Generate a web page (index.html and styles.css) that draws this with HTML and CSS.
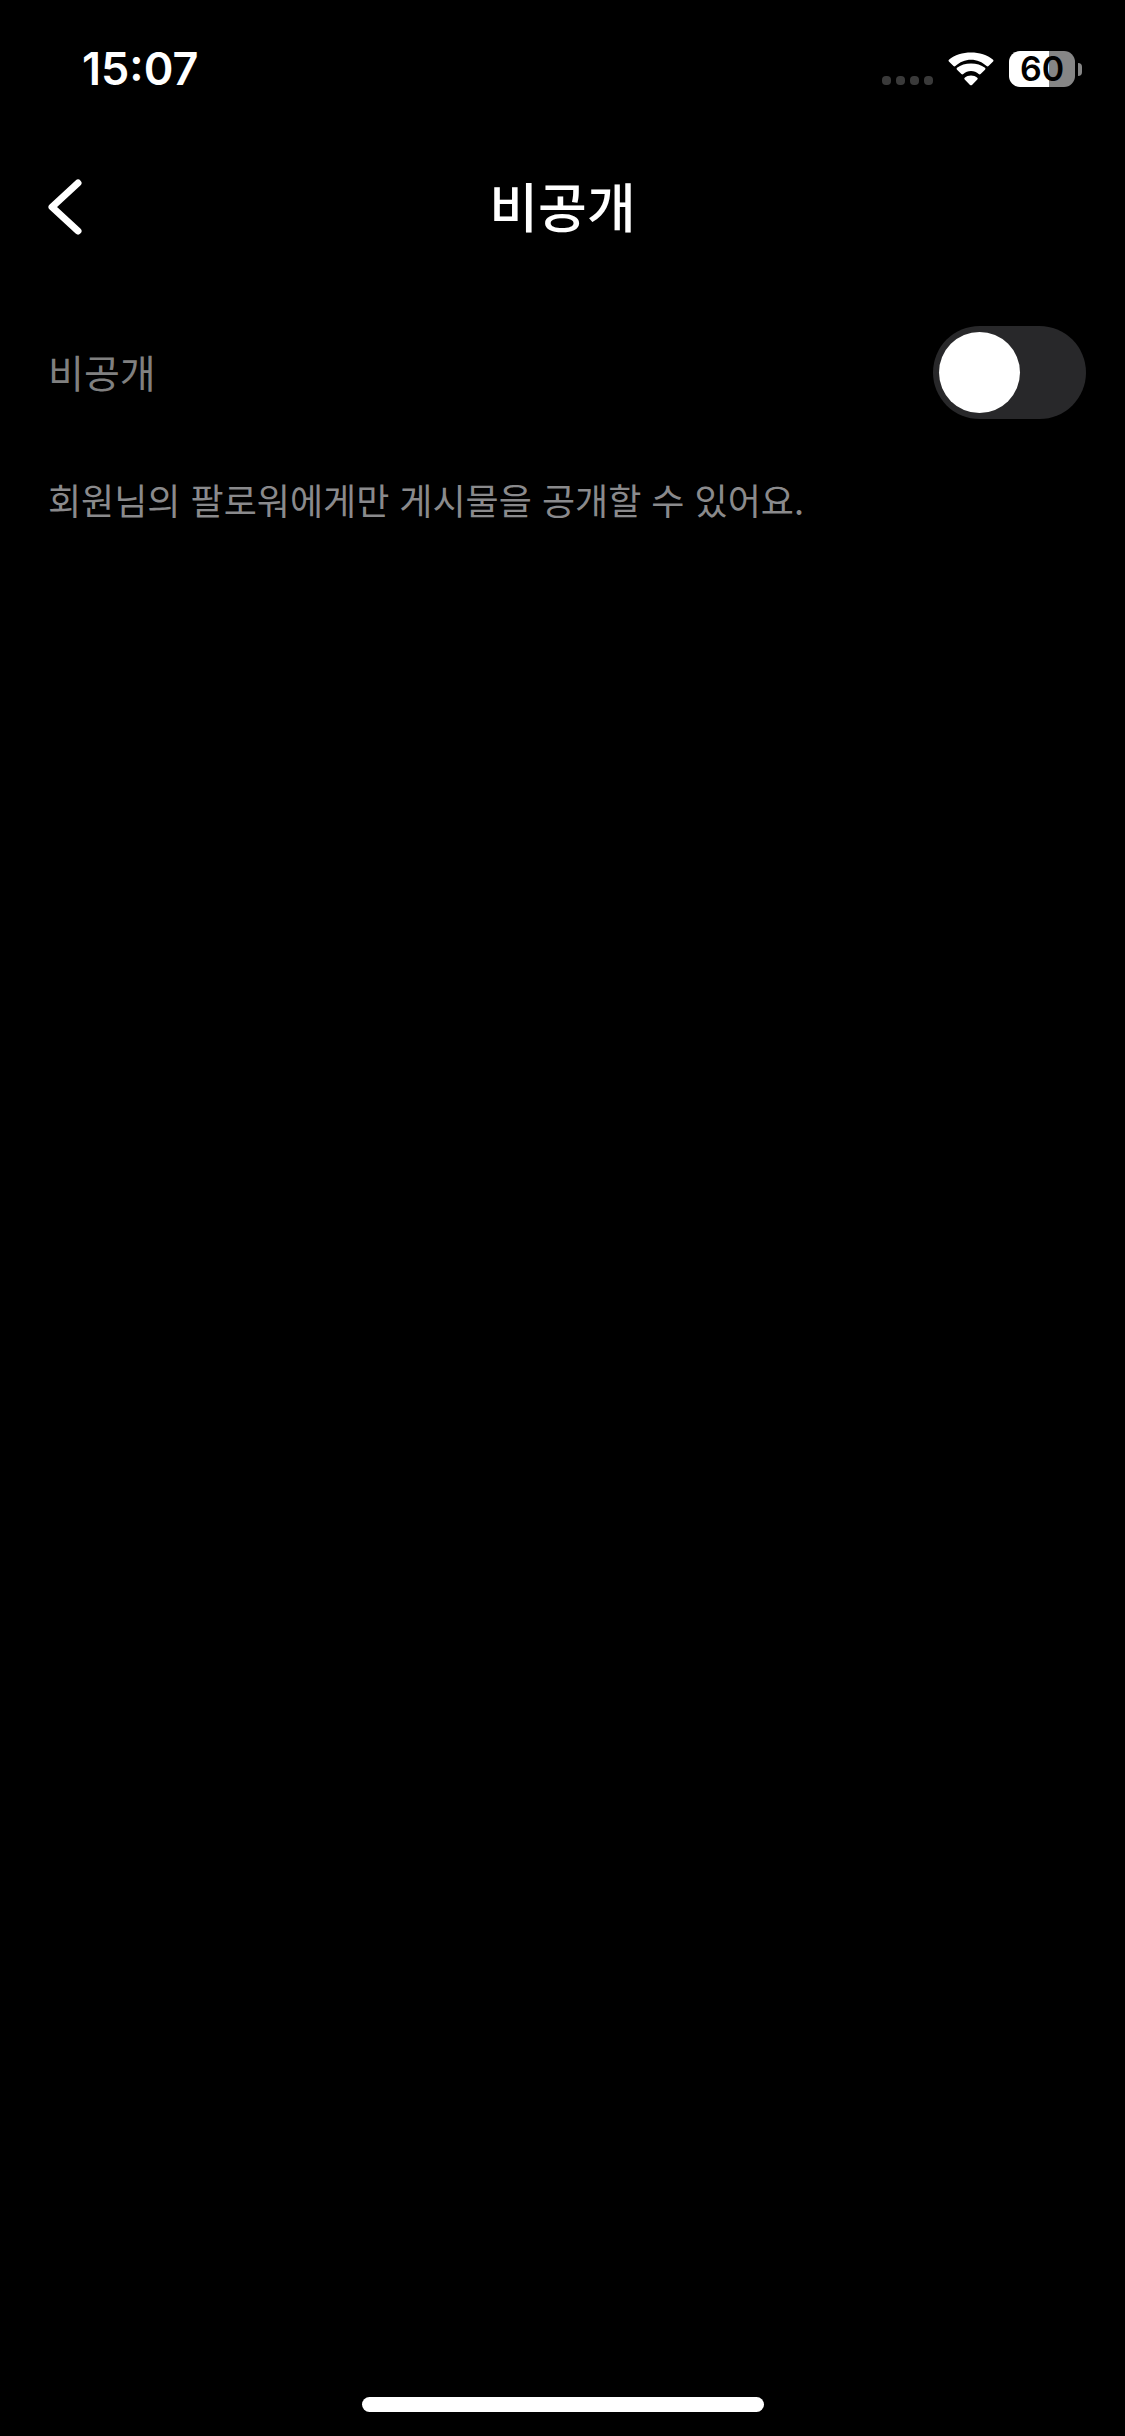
FILE: index.html
```html
<!DOCTYPE html>
<html lang="ko">
<head>
    <meta charset="utf-8" />
    <meta name="viewport" content="width=device-width, initial-scale=1">
    <title>비공개</title>
    <link rel="stylesheet" href="styles.css">
</head>
<body>
    <div class="statusbar">
        <div class="time">15:07</div>
        <div class="status-icons">
            <svg class="signal" viewBox="0 0 51 11" width="51" height="11">
                <rect x="0" y="0" width="9" height="9" rx="4" />
                <rect x="14" y="0" width="9" height="9" rx="4" />
                <rect x="28" y="0" width="9" height="9" rx="4" />
                <rect x="42" y="0" width="9" height="9" rx="4" />
            </svg>
            <svg class="wifi" viewBox="0 0 46 34" width="46" height="34">
                <path d="M23 7.800c5.900 0 11.400 2.300 15.600 6.300q1 .9 1.900 0l4.600-4.500q.9-1 0-1.900C39.200 2.800 31.400.4 23 .4S6.800 2.800.9 7.700q-.9.900 0 1.900l4.600 4.500q.9.900 1.900 0C11.600 10.100 17.100 7.800 23 7.800z" />
                <path d="M23 19c2.900 0 5.600 1.100 7.700 3q1 .9 1.900 0l4.400-4.300q1-1 0-1.900C33.300 12.900 28.400 11.500 23 11.500S12.700 12.900 9 15.800q-1 .9 0 1.900l4.400 4.300q.9.900 1.900 0c2.100-1.900 4.800-3 7.700-3z" />
                <path d="M29.300 25.800q1 .9 0 1.800L24 32.900q-1 .9-2 0l-5.300-5.300q-1-.9 0-1.800c1.700-1.400 3.900-2.300 6.300-2.300s4.600.9 6.300 2.300z" />
            </svg>
            <div class="battery">
                <div class="level">60</div>
                <div class="cap"></div>
            </div>
        </div>
    </div>

    <header class="header">
        <button class="back" type="button" aria-label="뒤로">
            <svg viewBox="0 0 36 60" width="36" height="60">
                <path d="M30 6L4 30L30 54" />
            </svg>
        </button>
        <h1 class="title">비공개</h1>
    </header>

    <main class="content">
        <div class="row">
            <label class="label" for="private">비공개</label>
            <input id="private" class="switch" type="checkbox" role="switch">
        </div>
        <p class="info">회원님의 팔로워에게만 게시물을 공개할 수 있어요.</p>
    </main>

    <div class="home"></div>
</body>
</html>
```

FILE: styles.css
```css
* {
    margin: 0;
    padding: 0;
    box-sizing: border-box;
}

body {
    display: flex;
    flex-direction: column;
    min-height: 100vh;
    background: #000;
    color: #fff;
    font-family: "Noto Sans CJK KR", sans-serif;
}

.statusbar {
    display: flex;
    justify-content: space-between;
    align-items: center;
    height: 138px;
    padding: 0 43px 0 82px;
}

.time {
    font-family: Inter, sans-serif;
    font-size: 45px;
    font-weight: 600;
    line-height: 52px;
}

.status-icons {
    display: flex;
    align-items: center;
    gap: 15px;
}

.signal {
    align-self: flex-end;
    fill: #3a3a3a;
}

.wifi {
    fill: #fff;
}

.battery {
    display: flex;
    align-items: center;
    gap: 3px;
}

.level {
    width: 66px;
    height: 36px;
    border-radius: 11px;
    background: linear-gradient(to right, #fff 60%, #868686 60%);
    color: #000;
    font-family: Inter, sans-serif;
    font-size: 34px;
    font-weight: 600;
    line-height: 36px;
    text-align: center;
}

.cap {
    width: 4px;
    height: 13px;
    border-radius: 0 4px 4px 0;
    background: #868686;
}

.header {
    display: grid;
    grid-template-columns: 1fr auto 1fr;
    align-items: center;
    height: 138px;
    padding: 0 48px;
}

.back {
    justify-self: start;
    display: flex;
    border: none;
    background: none;
    cursor: pointer;
}

.back path {
    fill: none;
    stroke: #fff;
    stroke-width: 7;
    stroke-linecap: round;
    stroke-linejoin: round;
}

.title {
    padding-bottom: 4px;
    font-size: 53px;
    font-weight: 500;
    line-height: 80px;
}

.content {
    padding: 50px 39px 0 48px;
}

.row {
    display: flex;
    justify-content: space-between;
    align-items: center;
}

.label {
    padding-bottom: 4px;
    color: #808080;
    font-size: 39px;
    line-height: 60px;
}

.switch {
    appearance: none;
    display: flex;
    width: 153px;
    height: 93px;
    padding: 6px;
    border-radius: 47px;
    background: #28282a;
    cursor: pointer;
}

.switch::before {
    content: "";
    width: 81px;
    height: 81px;
    border-radius: 50%;
    background: #fff;
}

.switch:checked {
    justify-content: flex-end;
    background: #34c759;
}

.info {
    margin-top: 52px;
    color: #8a8a8c;
    font-size: 36px;
    line-height: 56px;
}

.home {
    width: 402px;
    height: 15px;
    margin: auto auto 24px;
    border-radius: 8px;
    background: #fff;
}
```
